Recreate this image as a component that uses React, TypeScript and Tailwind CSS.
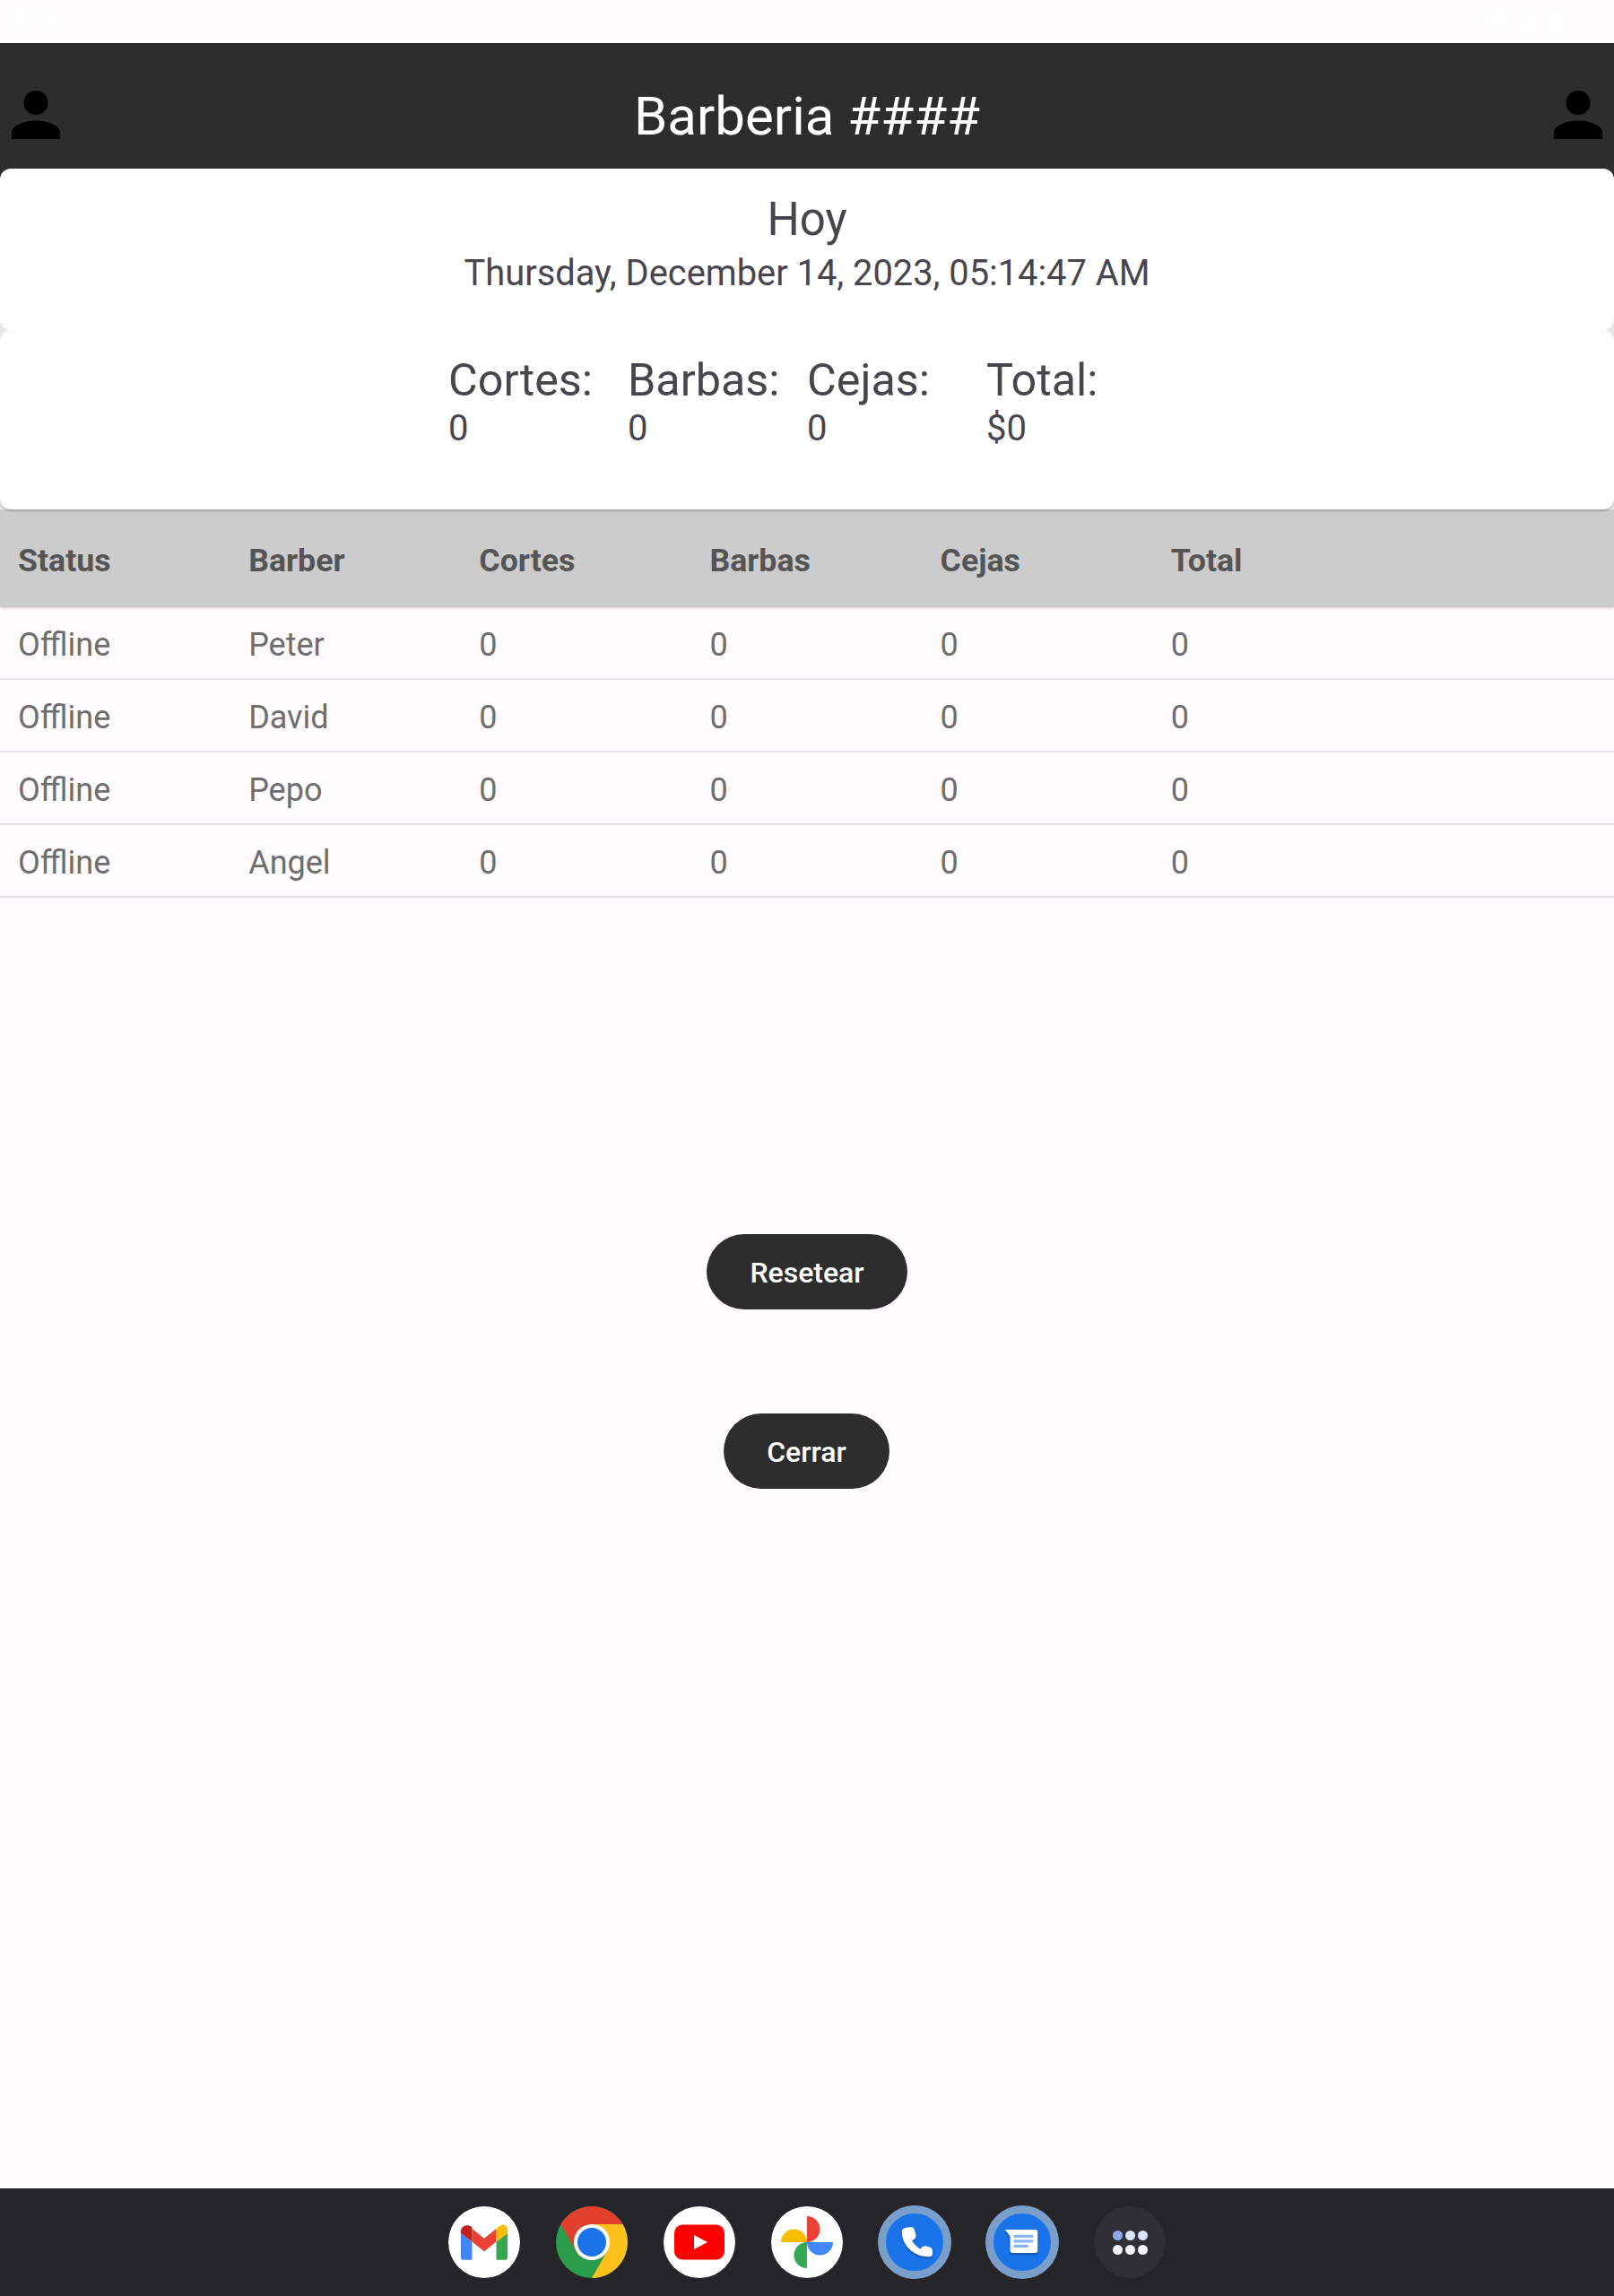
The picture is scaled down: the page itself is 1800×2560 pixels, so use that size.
import React from "react";

const rows = ["Peter", "David", "Pepo", "Angel"];
const headers = ["Status", "Barber", "Cortes", "Barbas", "Cejas", "Total"];

const stats = [
  { label: "Cortes:", value: "0" },
  { label: "Barbas:", value: "0" },
  { label: "Cejas:", value: "0" },
  { label: "Total:", value: "$0" },
];

const UserIcon = () => (
  <svg width="54" height="54" viewBox="0 0 54 54" fill="#000">
    <circle cx="27" cy="13.500" r="13.500" />
    <path d="M0 54V47C0 39 13 33.500 27 33.500S54 39 54 47V54Z" />
  </svg>
);

const Gmail = () => (
  <div className="w-20 h-20 rounded-full bg-white flex items-center justify-center">
    <svg width="54" height="41" viewBox="0 0 56 42">
      <path d="M1 38V10L14 20V41H4Q1 41 1 38Z" fill="#4285f4" />
      <path d="M42 20L55 10V38Q55 41 52 41H42Z" fill="#34a853" />
      <path d="M14 5V20L28 31L42 20V5L28 16Z" fill="#ea4335" />
      <path d="M1 10V8C1 1 9 -1 14 3V20Z" fill="#c5221f" />
      <path d="M42 5L47 1C50 -1 55 1 55 7V10L42 20Z" fill="#fbbc04" />
    </svg>
  </div>
);

const Chrome = () => (
  <svg width="80" height="80" viewBox="0 0 80 80">
    <circle cx="40" cy="40" r="40" fill="#2a9c4a" />
    <path d="M40 20H74.600A40 40 0 0 0 5.400 20L22.700 50Z" fill="#e2402f" />
    <path d="M40 20H74.600A40 40 0 0 1 40 80L57.300 50Z" fill="#fcc11a" />
    <circle cx="40" cy="40" r="20" fill="#fff" />
    <circle cx="40" cy="40" r="16" fill="#1a73e8" />
  </svg>
);

const Youtube = () => (
  <div className="w-20 h-20 rounded-full bg-white flex items-center justify-center">
    <svg width="56" height="40" viewBox="0 0 56 40">
      <rect width="56" height="39" y="0.500" rx="9" fill="#ff0000" />
      <path d="M22 12V28L37 20Z" fill="#fff" />
    </svg>
  </div>
);

const Photos = () => (
  <div className="w-20 h-20 rounded-full bg-white flex items-center justify-center">
    <svg width="60" height="60" viewBox="-30 -30 60 60">
      <path d="M-29 0A14.500 14.500 0 0 1 0 0Z" fill="#fbbc04" />
      <path d="M0 -29A14.500 14.500 0 0 1 0 0Z" fill="#ea4335" />
      <path d="M29 0A14.500 14.500 0 0 1 0 0Z" fill="#4285f4" />
      <path d="M0 29A14.500 14.500 0 0 1 0 0Z" fill="#34a853" />
    </svg>
  </div>
);

const Phone = () => (
  <div className="w-20 h-20 rounded-full bg-[#1a73e8] border-[8px] border-[#7b9fcb] shadow-[0_0_0_1px_#7b9fcb] flex items-center justify-center">
    <svg width="37" height="34" viewBox="0 0 40 37" className="ml-1 drop-shadow-[0_2px_1px_rgba(0,0,0,0.25)]">
      <path d="M6 1L13 0Q16 0 17 3L19 10Q19 13 17 15L14 17Q19 24 24 27L27 24Q29 23 31 23L37 25Q39 26 39 29V33Q39 36 36 36Q20 37 9 25Q1 15 2 5Q2 2 6 1Z" fill="#fff" />
    </svg>
  </div>
);

const Messages = () => (
  <div className="w-20 h-20 rounded-full bg-[#1a73e8] border-[8px] border-[#7b9fcb] shadow-[0_0_0_1px_#7b9fcb] flex items-center justify-center">
    <svg width="39" height="28" viewBox="0 0 42 30" className="drop-shadow-[0_2px_1px_rgba(0,0,0,0.25)]">
      <path d="M0 0H36Q39 0 39 3V25Q39 28 36 28H9Q6 28 6 25V8Z" fill="#fff" />
      <rect x="10" y="6" width="24" height="3.500" rx="1.700" fill="#8ab4f8" />
      <rect x="10" y="12" width="24" height="3.500" rx="1.700" fill="#8ab4f8" />
      <rect x="10" y="18" width="18" height="3.500" rx="1.700" fill="#8ab4f8" />
    </svg>
  </div>
);

const AppsButton = () => (
  <div className="w-20 h-20 rounded-full bg-[#302f35] flex items-center justify-center">
    <div className="grid grid-cols-3 gap-x-[3px] gap-y-[5px]">
      <span className="w-[11px] h-[11px] rounded-full bg-[#8fa8e8]" />
      <span className="w-[11px] h-[11px] rounded-full bg-[#dbe2fb]" />
      <span className="w-[11px] h-[11px] rounded-full bg-[#dbe2fb]" />
      <span className="w-[11px] h-[11px] rounded-full bg-[#f4f3fb]" />
      <span className="w-[11px] h-[11px] rounded-full bg-[#f4f3fb]" />
      <span className="w-[11px] h-[11px] rounded-full bg-[#f4f3fb]" />
    </div>
  </div>
);

export default function App() {
  return (
    <div className="w-[1800px] h-[2560px] flex flex-col bg-[#fffbfe] font-['Roboto',sans-serif]">
      {/* status bar is white on near white in the shot, barely visible */}
      <div className="h-12 shrink-0 flex items-center justify-between pl-[17px] pr-[57px] text-white text-[27px]">
        <span>5:14</span>
        <svg width="88" height="24" viewBox="0 0 88 24" fill="#fff">
          <path d="M0 5Q15 -3 31 5L15 24Z" />
          <path d="M58 2V24H35Z" />
          <rect x="73" y="0" width="15" height="24" rx="2" />
        </svg>
      </div>

      <header className="h-[156px] -mb-4 shrink-0 bg-[#2d2d2d] flex items-center justify-between px-[13px] pt-5 pb-4">
        <UserIcon />
        <h1 className="text-[60px] text-white leading-none mt-1">Barberia ####</h1>
        <UserIcon />
      </header>

      <section className="relative z-10 h-[180px] shrink-0 bg-white rounded-xl flex flex-col items-center text-[#49454f] pt-[27px]">
        <div className="text-[51px] leading-[60px]">Hoy</div>
        <div className="text-[39.85px] leading-[50px] mt-[5px]">Thursday, December 14, 2023, 05:14:47 AM</div>
      </section>

      <div className="relative -mt-4 pt-4 shrink-0 bg-[#e8e6e9]">
        <section className="h-[200px] bg-white rounded-xl shadow-[0_2px_2px_rgba(0,0,0,0.2)] flex justify-center text-[#49454f] pt-[26px]">
          <div className="flex w-[800px]">
            {stats.map((s) => (
              <div key={s.label} className="w-[200px]">
                <div className="text-[50.3px] leading-[60px]">{s.label}</div>
                <div className="text-[40px] leading-[48px]">{s.value}</div>
              </div>
            ))}
          </div>
        </section>
      </div>

      <div className="h-[109px] shrink-0 bg-[#cccccc] grid grid-cols-7 items-center shadow-[0_1px_3px_rgba(0,0,0,0.2)] pt-1.5">
        {headers.map((h) => (
          <div key={h} className="pl-5 text-[35.7px] font-bold text-[#555555]">{h}</div>
        ))}
      </div>

      {rows.map((name) => (
        <div key={name} className="h-[81px] shrink-0 grid grid-cols-7 items-center border-b-2 border-[#e6e0e9] pt-1 text-[36px] text-[#6e6e6e]">
          <div className="pl-5">Offline</div>
          <div className="pl-5">{name}</div>
          <div className="pl-5">0</div>
          <div className="pl-5">0</div>
          <div className="pl-5">0</div>
          <div className="pl-5">0</div>
        </div>
      ))}

      <div className="flex-1 flex flex-col items-center pt-[375px] gap-[116px]">
        <button className="h-[84px] w-[224px] pt-0.5 rounded-[42px] bg-[#2d2d2d] text-white text-[32px] font-medium">Resetear</button>
        <button className="h-[84px] w-[185px] pt-0.5 mr-px rounded-[42px] bg-[#2d2d2d] text-white text-[32px] font-medium">Cerrar</button>
      </div>

      <nav className="h-[120px] shrink-0 bg-[#252429] flex items-center justify-center gap-10">
        <Gmail />
        <Chrome />
        <Youtube />
        <Photos />
        <Phone />
        <Messages />
        <AppsButton />
      </nav>
    </div>
  );
}
